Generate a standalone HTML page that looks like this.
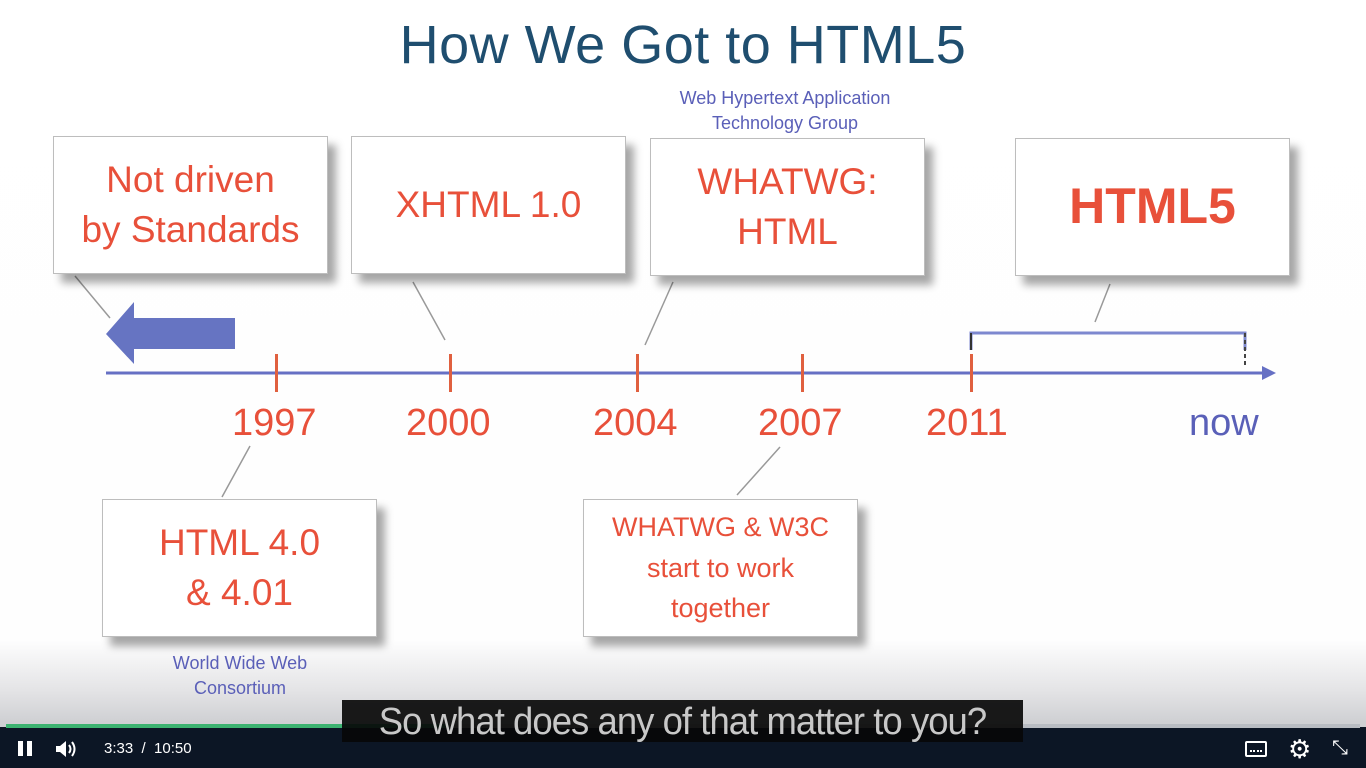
<!DOCTYPE html>
<html><head><meta charset="utf-8"><style>
body{margin:0;width:1366px;height:768px;overflow:hidden;position:relative;font-family:"Liberation Sans",sans-serif;background:linear-gradient(#fff 0,#fefefe 640px,#e4e4e6 690px,#cfd0d3 722px);}
.a{position:absolute}
.box{position:absolute;background:#fff;border:1px solid #bdbdbd;box-shadow:8px 9px 8px rgba(0,0,0,.35);color:#e8503a;text-align:center;display:flex;align-items:center;justify-content:center;line-height:1.35}
.yr{position:absolute;color:#e8503a;font-size:38px;top:402px}
.tk{position:absolute;width:3px;height:38px;background:#e0603f;top:354px}
.blue{color:#5a5fb8;font-size:18px;text-align:center;position:absolute}
</style></head><body>
<div class="a" style="left:0;width:1366px;top:14px;text-align:center;font-size:54px;color:#1f4e6f;letter-spacing:0.5px">How We Got to HTML5</div>
<div class="blue" style="left:640px;width:290px;top:86px;line-height:25px">Web Hypertext Application<br>Technology Group</div>
<svg class="a" style="left:0;top:0" width="1366" height="720">
<g stroke="#999" stroke-width="1.5" fill="none">
<line x1="75" y1="276" x2="110" y2="318"/><line x1="413" y1="282" x2="445" y2="340"/>
<line x1="673" y1="282" x2="645" y2="345"/><line x1="1110" y1="284" x2="1095" y2="322"/>
<line x1="250" y1="446" x2="222" y2="497"/><line x1="780" y1="447" x2="737" y2="495"/>
</g>
<line x1="106" y1="373" x2="1268" y2="373" stroke="#6670c4" stroke-width="3"/>
<polygon points="1262,366 1276,373 1262,380" fill="#6670c4"/>
<polygon points="106,334 134,302 134,318 235,318 235,349 134,349 134,364" fill="#6674c2"/>
<polyline points="971,350 971,333 1245,333 1245,350" fill="none" stroke="#7d88cf" stroke-width="3"/>
<line x1="971" y1="333" x2="971" y2="350" stroke="#333" stroke-width="2"/>
<line x1="1245" y1="333" x2="1245" y2="368" stroke="#444" stroke-width="2" stroke-dasharray="4 3"/>
</svg>
<div class="tk" style="left:275px"></div><div class="tk" style="left:449px"></div><div class="tk" style="left:636px"></div><div class="tk" style="left:801px"></div><div class="tk" style="left:970px"></div>
<div class="yr" style="left:232px">1997</div><div class="yr" style="left:406px">2000</div><div class="yr" style="left:593px">2004</div><div class="yr" style="left:758px">2007</div><div class="yr" style="left:926px">2011</div>
<div class="yr" style="left:1189px;color:#5a60b8">now</div>
<div class="box" style="left:53px;top:136px;width:273px;height:136px;font-size:37px">Not driven<br>by Standards</div>
<div class="box" style="left:351px;top:136px;width:273px;height:136px;font-size:37px">XHTML 1.0</div>
<div class="box" style="left:650px;top:138px;width:273px;height:136px;font-size:37px">WHATWG:<br>HTML</div>
<div class="box" style="left:1015px;top:138px;width:273px;height:136px;font-size:50px;font-weight:bold">HTML5</div>
<div class="box" style="left:102px;top:499px;width:273px;height:136px;font-size:37px">HTML 4.0<br>&amp; 4.01</div>
<div class="box" style="left:583px;top:499px;width:273px;height:136px;font-size:27px;line-height:1.5">WHATWG &amp; W3C<br>start to work<br>together</div>
<div class="blue" style="left:140px;width:200px;top:651px;line-height:25px">World Wide Web<br>Consortium</div>
<div class="a" style="left:0;top:727px;width:1366px;height:41px;background:#0c1625"></div>
<div class="a" style="left:6px;top:724px;width:1354px;height:4px;background:#b8bcc2"></div>
<div class="a" style="left:6px;top:724px;width:443px;height:4px;background:#3cb371"></div>
<div class="a" style="left:342px;top:700px;width:681px;height:42px;background:rgba(8,8,8,.92)"></div>
<div class="a" style="left:342px;top:700px;width:681px;text-align:center;font-size:38px;color:#c8c8c8;line-height:44px;letter-spacing:-1px;transform:scaleX(0.96)">So what does any of that matter to you?</div>
<div class="a" style="left:18px;top:741px;width:5px;height:15px;background:#fff"></div><div class="a" style="left:27px;top:741px;width:5px;height:15px;background:#fff"></div>
<svg class="a" style="left:55px;top:739px" width="24" height="20"><polygon points="1,7 5,7 11,2 11,18 5,13 1,13" fill="#fff"/><path d="M14 6 Q17 10 14 14 M17 3 Q22 10 17 17" stroke="#fff" stroke-width="2" fill="none"/></svg>
<div class="a" style="left:104px;top:740px;color:#fff;font-size:15px">3:33 &nbsp;/ &nbsp;10:50</div>
<div class="a" style="left:1245px;top:741px;width:22px;height:16px;border:2px solid #fff;border-radius:2px;box-sizing:border-box"></div>
<div class="a" style="left:1250px;top:750px;width:12px;height:2px;border-top:2px dotted #fff"></div>
<div class="a" style="left:1288px;top:734px;color:#fff;font-size:26px">⚙</div>
<div class="a" style="left:1332px;top:737px;color:#fff;font-size:20px">⤡</div>
</body></html>
